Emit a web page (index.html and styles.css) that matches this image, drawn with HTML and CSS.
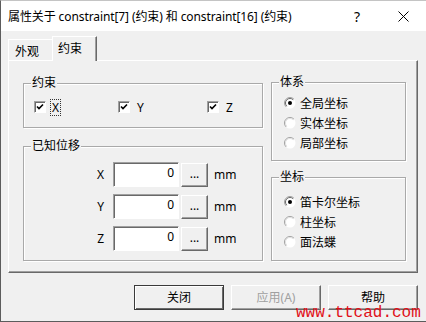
FILE: index.html
```html
<!DOCTYPE html>
<html>
<head>
<title>属性</title>
<meta charset="UTF-8">
<link rel="stylesheet" href="styles.css">
</head>
<body>
<div class="window">
<div class="titlebar">
<span class="title">属性关于 constraint[7] (约束) 和 constraint[16] (约束)</span>
<span class="caption-btn help">?</span>
<span class="caption-btn"><svg width="11" height="11" viewBox="0 0 11 11"><path d="M0.5 0.5 L10.5 10.5 M10.5 0.5 L0.5 10.5" stroke="#000" stroke-width="1" fill="none"/></svg></span>
</div>
<div class="dialog">
<div class="tabs">
<div class="tab">外观</div>
<div class="tab tab-active">约束</div>
</div>
<div class="panel">
<div class="col-left">
<div class="group group-checks">
<span class="group-label">约束</span>
<div class="check-item item-x"><span class="checkbox"><svg width="8" height="8" viewBox="0 0 8 8"><path d="M1 3.5 L3 5.5 L7 1.5" stroke="#000" stroke-width="1.6" fill="none"/></svg></span><span class="check-text focus">X</span></div>
<div class="check-item item-y"><span class="checkbox"><svg width="8" height="8" viewBox="0 0 8 8"><path d="M1 3.5 L3 5.5 L7 1.5" stroke="#000" stroke-width="1.6" fill="none"/></svg></span><span class="check-text">Y</span></div>
<div class="check-item"><span class="checkbox"><svg width="8" height="8" viewBox="0 0 8 8"><path d="M1 3.5 L3 5.5 L7 1.5" stroke="#000" stroke-width="1.6" fill="none"/></svg></span><span class="check-text">Z</span></div>
</div>
<div class="group group-move">
<span class="group-label">已知位移</span>
<div class="row"><span class="axis">X</span><span class="field">0</span><span class="dots">...</span><span class="unit">mm</span></div>
<div class="row"><span class="axis">Y</span><span class="field">0</span><span class="dots">...</span><span class="unit">mm</span></div>
<div class="row"><span class="axis">Z</span><span class="field">0</span><span class="dots">...</span><span class="unit">mm</span></div>
</div>
</div>
<div class="col-right">
<div class="group group-system">
<span class="group-label">体系</span>
<div class="radio-row"><svg class="radio" width="12" height="12" viewBox="0 0 12 12"><circle cx="6" cy="6" r="5.5" fill="#fff"/><path d="M9.9 2.1 A5.5 5.5 0 0 0 2.1 9.9" stroke="#a0a0a0" fill="none"/><path d="M9.2 2.8 A4.5 4.5 0 0 0 2.8 9.2" stroke="#696969" fill="none"/><circle cx="6" cy="6" r="2" fill="#000"/></svg><span>全局坐标</span></div>
<div class="radio-row"><svg class="radio" width="12" height="12" viewBox="0 0 12 12"><circle cx="6" cy="6" r="5.5" fill="#fff"/><path d="M9.9 2.1 A5.5 5.5 0 0 0 2.1 9.9" stroke="#a0a0a0" fill="none"/><path d="M9.2 2.8 A4.5 4.5 0 0 0 2.8 9.2" stroke="#e0e0e0" fill="none"/></svg><span>实体坐标</span></div>
<div class="radio-row"><svg class="radio" width="12" height="12" viewBox="0 0 12 12"><circle cx="6" cy="6" r="5.5" fill="#fff"/><path d="M9.9 2.1 A5.5 5.5 0 0 0 2.1 9.9" stroke="#a0a0a0" fill="none"/><path d="M9.2 2.8 A4.5 4.5 0 0 0 2.8 9.2" stroke="#e0e0e0" fill="none"/></svg><span>局部坐标</span></div>
</div>
<div class="group group-coord">
<span class="group-label">坐标</span>
<div class="radio-row"><svg class="radio" width="12" height="12" viewBox="0 0 12 12"><circle cx="6" cy="6" r="5.5" fill="#fff"/><path d="M9.9 2.1 A5.5 5.5 0 0 0 2.1 9.9" stroke="#a0a0a0" fill="none"/><path d="M9.2 2.8 A4.5 4.5 0 0 0 2.8 9.2" stroke="#696969" fill="none"/><circle cx="6" cy="6" r="2" fill="#000"/></svg><span>笛卡尔坐标</span></div>
<div class="radio-row"><svg class="radio" width="12" height="12" viewBox="0 0 12 12"><circle cx="6" cy="6" r="5.5" fill="#fff"/><path d="M9.9 2.1 A5.5 5.5 0 0 0 2.1 9.9" stroke="#a0a0a0" fill="none"/><path d="M9.2 2.8 A4.5 4.5 0 0 0 2.8 9.2" stroke="#e0e0e0" fill="none"/></svg><span>柱坐标</span></div>
<div class="radio-row"><svg class="radio" width="12" height="12" viewBox="0 0 12 12"><circle cx="6" cy="6" r="5.5" fill="#fff"/><path d="M9.9 2.1 A5.5 5.5 0 0 0 2.1 9.9" stroke="#a0a0a0" fill="none"/><path d="M9.2 2.8 A4.5 4.5 0 0 0 2.8 9.2" stroke="#e0e0e0" fill="none"/></svg><span>面法蝶</span></div>
</div>
</div>
</div>
<div class="buttons">
<span class="btn btn-default">关闭</span>
<span class="btn btn-disabled">应用(A)</span>
<span class="btn">帮助</span>
</div>
</div>
<div class="watermark">www.ttcad.com</div>
</div>
</body>
</html>
```

FILE: styles.css
```css
body{
    margin: 0;
    font-family: "Noto Sans", "Noto Sans CJK SC", sans-serif;
    font-size: 12px;
    color: #000;
}
.window{
    position: relative;
    width: 426px;
    height: 322px;
    box-sizing: border-box;
    background: #f0f0f0;
    border-top: 1px solid #c4c4c4;
    border-left: 1px solid #5c5c5c;
    border-bottom: 1px solid #5c5c5c;
}
.titlebar{
    display: flex;
    align-items: center;
    height: 30px;
    background: #fff;
    padding-left: 7px;
}
.title{
    flex: 1;
    white-space: nowrap;
    letter-spacing: -0.1px;
}
.caption-btn{
    display: flex;
    align-items: center;
    justify-content: center;
    width: 46px;
    height: 30px;
}
.help{
    font-size: 14px;
}
.dialog{
    padding: 4px 8px 0 7px;
}
.tabs{
    display: flex;
    align-items: flex-end;
    height: 26px;
    margin-bottom: -1px;
    position: relative;
    z-index: 1;
}
.tab{
    box-sizing: border-box;
    width: 44px;
    height: 22px;
    padding: 4px 0 0 6px;
    border-top: 1px solid #fff;
    border-left: 1px solid #fff;
    line-height: 16px;
}
.tab-active{
    width: 45px;
    height: 25px;
    padding: 4px 0 0 5px;
    background: #f0f0f0;
    border-right: 1px solid #696969;
    box-shadow: inset -1px 0 0 #a0a0a0;
}
.panel{
    display: flex;
    align-items: flex-start;
    box-sizing: border-box;
    width: 410px;
    height: 213px;
    border: 1px solid;
    border-color: #fff #696969 #696969 #fff;
    box-shadow: inset -1px -1px 0 #a0a0a0;
    padding-left: 14px;
}
.col-left{
    width: 240px;
    margin-top: 22px;
}
.col-right{
    width: 135px;
    margin-top: 21px;
    margin-left: 8px;
}
.group{
    position: relative;
    box-sizing: border-box;
    border: 1px solid #a9a9a9;
    box-shadow: inset 1px 1px 0 #fff, 1px 1px 0 #fff;
}
.group-label{
    position: absolute;
    top: -9px;
    left: 7px;
    padding: 0 1px;
    background: #f0f0f0;
    line-height: 16px;
}
.group-checks{
    display: flex;
    height: 45px;
    padding: 17px 0 0 10px;
}
.check-item{
    display: flex;
    align-items: center;
    height: 12px;
}
.item-x{
    width: 84px;
}
.item-y{
    width: 89px;
}
.checkbox{
    display: flex;
    align-items: center;
    justify-content: center;
    box-sizing: border-box;
    width: 12px;
    height: 12px;
    background: #fff;
    border: 1px solid;
    border-color: #a0a0a0 #fff #fff #a0a0a0;
    box-shadow: inset 1px 1px 0 #696969;
}
.check-text{
    margin-left: 6px;
    line-height: 15px;
    padding: 0 1px;
}
.focus{
    outline: 1px dotted #333;
    margin-left: 5px;
}
.group-move{
    display: flex;
    flex-direction: column;
    gap: 7px;
    height: 115px;
    margin-top: 18px;
    padding-top: 15px;
}
.row{
    display: flex;
    align-items: center;
    height: 25px;
}
.axis{
    width: 80px;
    margin-right: 9px;
    text-align: right;
}
.field{
    box-sizing: border-box;
    width: 66px;
    height: 25px;
    background: #fff;
    border: 1px solid;
    border-color: #a0a0a0 #fff #fff #a0a0a0;
    box-shadow: inset 1px 1px 0 #696969;
    text-align: right;
    padding: 2px 4px 0 0;
    line-height: 16px;
}
.dots{
    display: flex;
    align-items: center;
    justify-content: center;
    box-sizing: border-box;
    width: 27px;
    height: 24px;
    margin-left: 2px;
    border: 1px solid;
    border-color: #fff #696969 #696969 #fff;
    box-shadow: inset -1px -1px 0 #a0a0a0;
    padding-bottom: 2px;
}
.unit{
    margin-left: 6px;
}
.group-system{
    height: 79px;
    padding: 10px 0 0 12px;
}
.group-coord{
    height: 84px;
    margin-top: 16px;
    padding: 14px 0 0 12px;
}
.radio-row{
    display: flex;
    align-items: center;
    height: 20px;
}
.radio{
    margin-right: 4px;
    flex: none;
}
.buttons{
    display: flex;
    justify-content: flex-end;
    gap: 7px;
    margin-top: 12px;
}
.btn{
    display: flex;
    align-items: center;
    justify-content: center;
    box-sizing: border-box;
    width: 90px;
    height: 25px;
    border: 1px solid;
    border-color: #fff #696969 #696969 #fff;
    box-shadow: inset -1px -1px 0 #a0a0a0;
    line-height: 14px;
}
.btn-default{
    border-color: #3a3a3a;
    box-shadow: inset 1px 1px 0 #fff, inset -1px -1px 0 #696969;
}
.btn-disabled{
    color: #a0a0a0;
}
.watermark{
    position: absolute;
    left: 295px;
    top: 306px;
    font-family: "Liberation Mono", monospace;
    font-size: 16px;
    line-height: 13px;
    color: #e00f18;
    white-space: nowrap;
}
```
